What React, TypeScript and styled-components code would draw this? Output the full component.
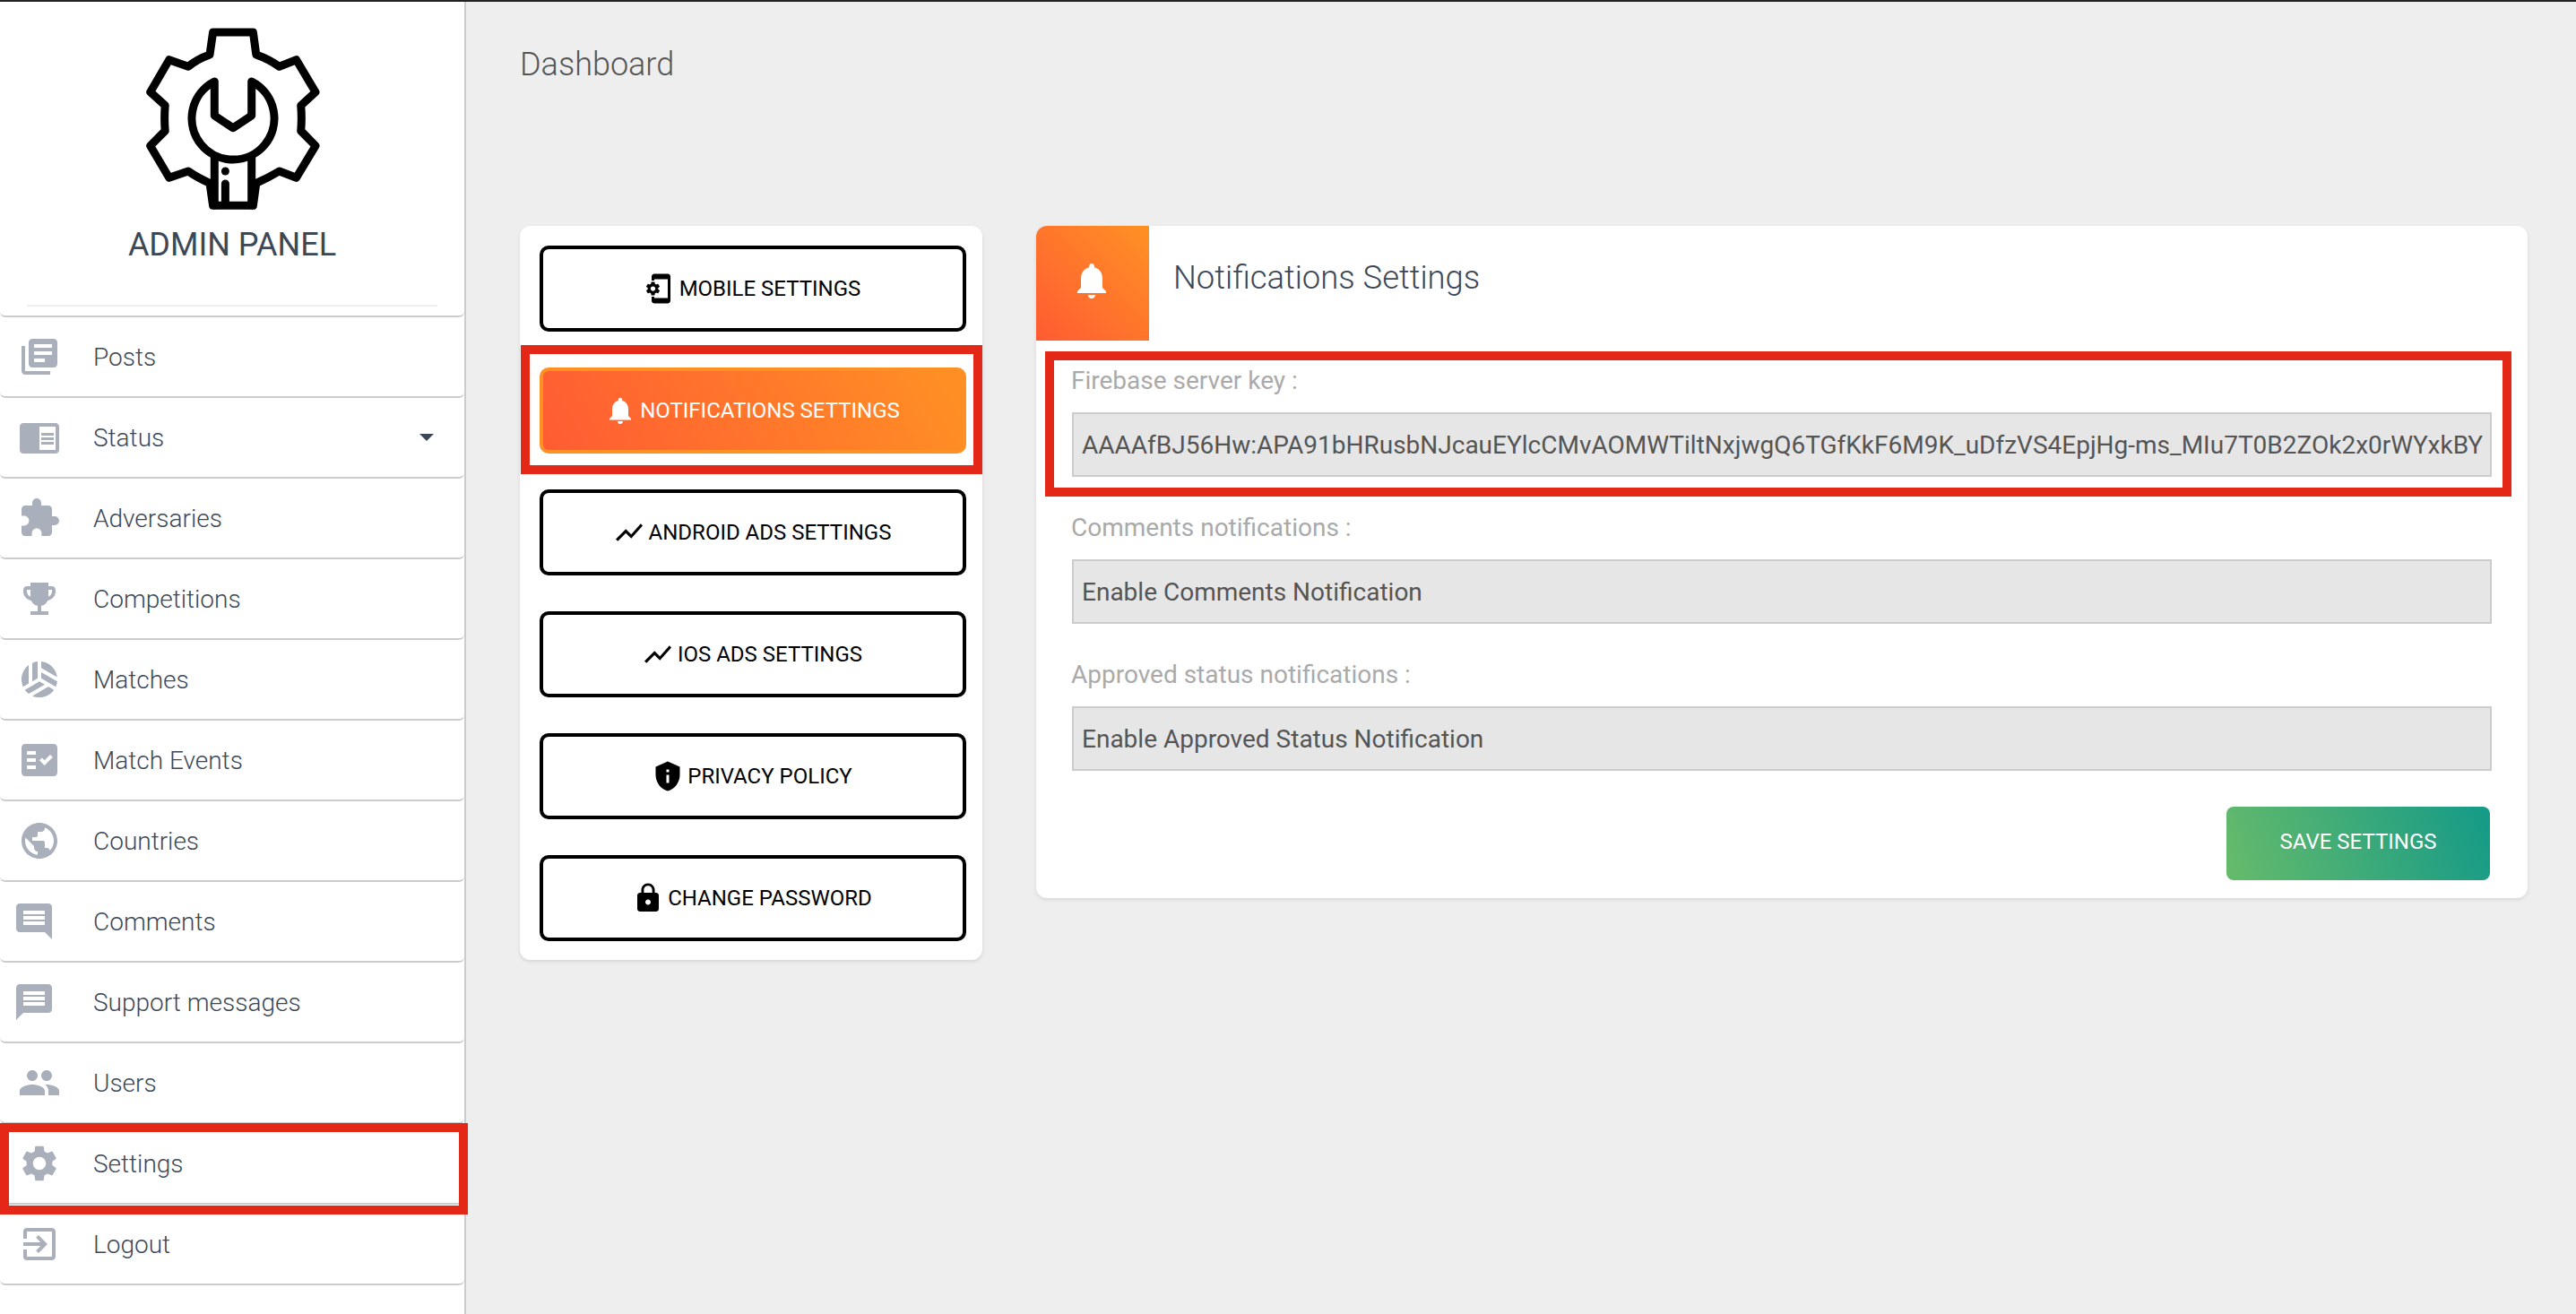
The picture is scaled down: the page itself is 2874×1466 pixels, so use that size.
import React from "react";
import styled, { createGlobalStyle } from "styled-components";
import {
  MdLibraryBooks,
  MdChromeReaderMode,
  MdExtension,
  MdEmojiEvents,
  MdSportsVolleyball,
  MdFactCheck,
  MdPublic,
  MdComment,
  MdMessage,
  MdPeople,
  MdSettings,
  MdExitToApp,
  MdPhonelinkSetup,
  MdNotifications,
  MdShowChart,
  MdPrivacyTip,
  MdLock,
} from "react-icons/md";

const GlobalStyle = createGlobalStyle`
  html, body {
    margin: 0;
    padding: 0;
    background: #eeeeee;
    font-family: Roboto, "Liberation Sans", sans-serif;
  }
  * {
    box-sizing: border-box;
  }
`;

const Page = styled.div`
  display: flex;
  min-height: 1466px;
  height: 1466px;
  overflow: hidden;
  border-top: 2px solid #222222;
  background: #eeeeee;
`;

const Sidebar = styled.aside`
  width: 520px;
  flex-shrink: 0;
  background: #fff;
  border-right: 2px solid #cccccc;
`;

const Brand = styled.div`
  display: flex;
  flex-direction: column;
  align-items: center;
  padding-top: 27px;
  padding-bottom: 10px;
  border-bottom: 2px solid #cccccc;
  border-radius: 0 0 6px 6px;
  svg {
    margin-left: 2px;
  }
`;

const BrandTitle = styled.div`
  margin-top: 14px;
  height: 40px;
  line-height: 40px;
  font-size: 36px;
  font-weight: 400;
  color: #3c4858;
`;

const BrandRule = styled.div`
  align-self: stretch;
  height: 2px;
  margin: 47px 30px 0;
  background: #eeeeee;
`;

const NavItem = styled.div`
  position: relative;
  display: flex;
  align-items: center;
  height: 90px;
  padding-left: 20px;
  border-bottom: 2px solid #cccccc;
  border-radius: 0 0 6px 6px;
  font-size: 28px;
  font-weight: 300;
  color: #3c4858;
`;

const NavIcon = styled.span<{ $nudge?: number }>`
  display: flex;
  width: 48px;
  height: 48px;
  margin-right: 36px;
  font-size: 48px;
  color: #a9afbb;
  transform: translateX(${(p) => p.$nudge ?? 0}px);
`;

const Caret = styled.span`
  position: absolute;
  right: 34px;
  top: 40px;
  width: 0;
  height: 0;
  border-left: 8px solid transparent;
  border-right: 8px solid transparent;
  border-top: 8px solid #3c4858;
`;

const Highlight = styled.div<{ $t: number; $r: number; $b: number; $l: number }>`
  position: absolute;
  top: ${(p) => p.$t}px;
  right: ${(p) => p.$r}px;
  bottom: ${(p) => p.$b}px;
  left: ${(p) => p.$l}px;
  border: 10px solid #e32818;
  z-index: 5;
  pointer-events: none;
`;

const Main = styled.main`
  flex: 1;
  min-width: 0;
  padding: 0 54px 0 60px;
`;

const Heading = styled.h1`
  margin: 0 0 110px;
  height: 140px;
  line-height: 140px;
  font-size: 36px;
  font-weight: 300;
  color: #555555;
`;

const Columns = styled.div`
  display: flex;
  align-items: flex-start;
  gap: 60px;
`;

const MenuCard = styled.div`
  display: flex;
  flex-direction: column;
  gap: 40px;
  width: 516px;
  flex-shrink: 0;
  padding: 22px 18px 21px 22px;
  background: #fff;
  border-radius: 12px;
  box-shadow: 0 2px 4px rgba(0, 0, 0, 0.1);
`;

const MenuButton = styled.div<{ $active?: boolean }>`
  position: relative;
  display: flex;
  align-items: center;
  justify-content: center;
  gap: 4px;
  height: 96px;
  padding-right: 2px;
  font-size: 24px;
  color: ${(p) => (p.$active ? "#fff" : "#000")};
  border: 4px solid ${(p) => (p.$active ? "#ff9124" : "#000")};
  border-radius: 10px;
  background: ${(p) => (p.$active ? "linear-gradient(60deg, #ff5b33, #ff9124)" : "#fff")};
  svg {
    font-size: 36px;
    flex-shrink: 0;
  }
`;

const FormCard = styled.section`
  flex: 1;
  min-width: 0;
  background: #fff;
  border-radius: 12px;
  box-shadow: 0 2px 4px rgba(0, 0, 0, 0.1);
`;

const FormHeader = styled.header`
  display: flex;
  align-items: flex-start;
`;

const HeaderIcon = styled.div`
  display: flex;
  align-items: center;
  justify-content: center;
  width: 126px;
  height: 128px;
  padding: 0 2px 6px 0;
  border-top-left-radius: 12px;
  background: linear-gradient(45deg, #ff5b33, #ff9124);
  color: #fff;
  font-size: 48px;
`;

const FormTitle = styled.h2`
  margin: 34px 0 0 27px;
  line-height: 48px;
  font-size: 36.4px;
  font-weight: 300;
  color: #3c4858;
`;

const FormBody = styled.div`
  display: flex;
  flex-direction: column;
  gap: 41px;
  padding: 29px 40px 0;
`;

const Field = styled.div`
  position: relative;
`;

const FieldLabel = styled.div`
  height: 32px;
  line-height: 32px;
  margin: 0 0 19px -1px;
  font-size: 28px;
  font-weight: 400;
  color: #aaaaaa;
`;

const FieldValue = styled.div`
  height: 72px;
  line-height: 70px;
  padding: 0 9px;
  overflow: hidden;
  white-space: nowrap;
  font-size: 28px;
  color: #555555;
  background: #e6e6e6;
  border: 2px solid #cccccc;
`;

const FormFooter = styled.div`
  display: flex;
  justify-content: flex-end;
  padding: 40px 42px 20px 0;
`;

const SaveButton = styled.div`
  display: flex;
  align-items: center;
  justify-content: center;
  width: 294px;
  height: 82px;
  padding-bottom: 4px;
  border-radius: 8px;
  background: linear-gradient(70deg, #66bb6a, #149a88);
  color: #fff;
  font-size: 24px;
`;

const Logo = () => (
  <svg width="200" height="210" viewBox="160 28 200 210" fill="none" stroke="#000" strokeWidth="9" strokeLinejoin="round" strokeLinecap="round">
    <path d="M237.6 35H282.4L285.8 60Q300 65 311.6 73.3L330.6 65.7L352 101.7L335.7 116.7Q337 131 335.7 145L352 161.7L330.6 197.3L311.6 190Q300 197 285.8 203.3L282.4 228.3H237.6L234 203.3Q220 197 210 190L188.7 197.3L167.7 161.7L184.2 145Q183 131 184.2 116.7L167.7 101.7L188.7 65.7L210 73.3Q220 65 234 60Z" />
    <path d="M239.3 90V128L260 141.7L280.7 128V90A46 46 0 1 1 239.3 90Z" />
    <path d="M239.3 174V228M280.7 174V228" />
    <path d="M251.4 204V226" />
    <circle cx="251.4" cy="190" r="4.5" fill="#000" stroke="none" />
  </svg>
);

const navItems = [
  { label: "Posts", icon: <MdLibraryBooks /> },
  { label: "Status", icon: <MdChromeReaderMode />, caret: true },
  { label: "Adversaries", icon: <MdExtension /> },
  { label: "Competitions", icon: <MdEmojiEvents /> },
  { label: "Matches", icon: <MdSportsVolleyball /> },
  { label: "Match Events", icon: <MdFactCheck /> },
  { label: "Countries", icon: <MdPublic /> },
  { label: "Comments", icon: <MdComment />, nudge: -6 },
  { label: "Support messages", icon: <MdMessage />, nudge: -6 },
  { label: "Users", icon: <MdPeople /> },
  { label: "Settings", icon: <MdSettings />, marked: true },
  { label: "Logout", icon: <MdExitToApp /> },
];

const menuItems = [
  { label: "MOBILE SETTINGS", icon: <MdPhonelinkSetup /> },
  { label: "NOTIFICATIONS SETTINGS", icon: <MdNotifications />, active: true },
  { label: "ANDROID ADS SETTINGS", icon: <MdShowChart /> },
  { label: "IOS ADS SETTINGS", icon: <MdShowChart /> },
  { label: "PRIVACY POLICY", icon: <MdPrivacyTip /> },
  { label: "CHANGE PASSWORD", icon: <MdLock /> },
];

const fields = [
  {
    label: "Firebase server key :",
    value: "AAAAfBJ56Hw:APA91bHRusbNJcauEYlcCMvAOMWTiltNxjwgQ6TGfKkF6M9K_uDfzVS4EpjHg-ms_MIu7T0B2ZOk2x0rWYxkBY",
    marked: true,
  },
  { label: "Comments notifications :", value: "Enable Comments Notification" },
  { label: "Approved status notifications :", value: "Enable Approved Status Notification" },
];

const App = () => {
  return (
    <Page>
      <GlobalStyle />
      <Sidebar>
        <Brand>
          <Logo />
          <BrandTitle>ADMIN PANEL</BrandTitle>
          <BrandRule />
        </Brand>
        {navItems.map((item) => (
          <NavItem key={item.label}>
            <NavIcon $nudge={item.nudge}>{item.icon}</NavIcon>
            {item.label}
            {item.caret && <Caret />}
            {item.marked && <Highlight $t={-1} $r={-4} $b={-13} $l={0} />}
          </NavItem>
        ))}
      </Sidebar>
      <Main>
        <Heading>Dashboard</Heading>
        <Columns>
          <MenuCard>
            {menuItems.map((item) => (
              <MenuButton key={item.label} $active={item.active}>
                {item.icon}
                {item.label}
                {item.active && <Highlight $t={-29} $r={-22} $b={-27} $l={-25} />}
              </MenuButton>
            ))}
          </MenuCard>
          <FormCard>
            <FormHeader>
              <HeaderIcon>
                <MdNotifications />
              </HeaderIcon>
              <FormTitle>Notifications Settings</FormTitle>
            </FormHeader>
            <FormBody>
              {fields.map((field) => (
                <Field key={field.label}>
                  <FieldLabel>{field.label}</FieldLabel>
                  <FieldValue>{field.value}</FieldValue>
                  {field.marked && <Highlight $t={-17} $r={-22} $b={-22} $l={-30} />}
                </Field>
              ))}
            </FormBody>
            <FormFooter>
              <SaveButton>SAVE SETTINGS</SaveButton>
            </FormFooter>
          </FormCard>
        </Columns>
      </Main>
    </Page>
  );
};

export default App;
